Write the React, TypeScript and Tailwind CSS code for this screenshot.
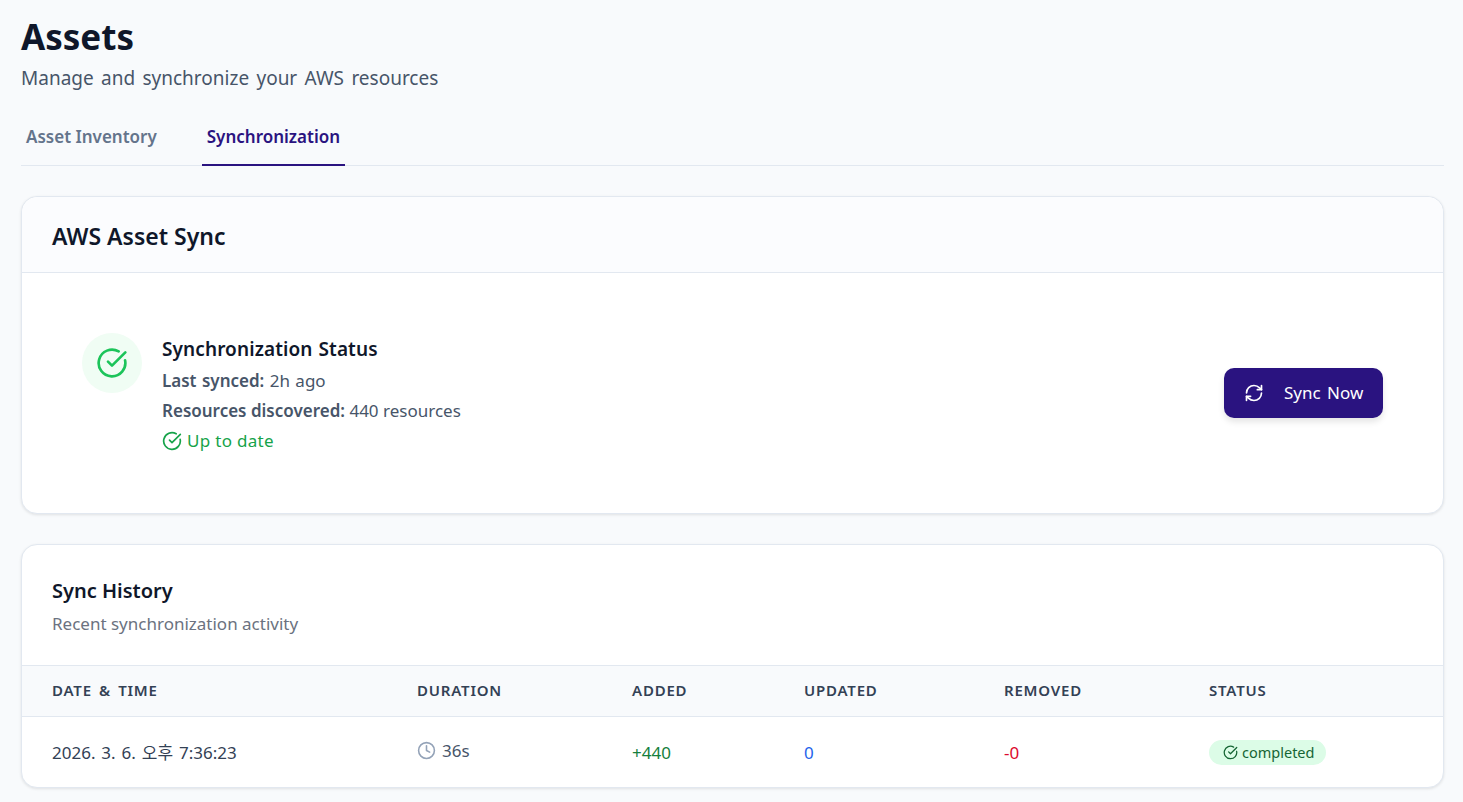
import React from 'react';
import { RefreshCw, CircleCheckBig, Clock } from 'lucide-react';

const font = "font-['Noto_Sans','Noto_Sans_CJK_KR',sans-serif]";

const HEADERS = ['DATE & TIME', 'DURATION', 'ADDED', 'UPDATED', 'REMOVED', 'STATUS'];

export default function App() {
  return (
    <div className={`${font} h-[802px] overflow-hidden bg-[#f8fafc] pl-[21px] pr-[19px] pt-[12px]`}>
      {/* Page heading */}
      <h1 className="text-[35px] leading-[50px] font-bold text-[#0f172a]">Assets</h1>
      <p className="mt-[3px] text-[19px] leading-[26px] [word-spacing:2.4px] text-[#475569]">Manage and synchronize your AWS resources</p>

      {/* Tabs */}
      <div className="mt-[18px] flex h-[57px] gap-[16px] border-b border-[#e2e8f0] text-[17px] font-semibold">
        <div className="flex h-[57px] items-center pl-[5px] pr-[4px] pb-[1px] text-[#64748b]">Asset Inventory</div>
        <div className="ml-[25px] flex h-[57px] items-center border-b-2 border-[#2a1380] px-[5px] text-[#2a1380]">Synchronization</div>
      </div>

      {/* Sync card */}
      <section className="mt-[30px] h-[318px] rounded-[16px] border border-[#e2e8f0] bg-white shadow-[0_1px_3px_rgba(0,0,0,0.1)]">
        <div className="flex h-[76px] items-center rounded-t-[16px] border-b border-[#e2e8f0] bg-[#fbfcfe] px-[30px] pt-[3px]">
          <h2 className="text-[23px] font-semibold text-[#0f172a]">AWS Asset Sync</h2>
        </div>
        <div className="flex items-center justify-between pl-[60px] pr-[60px] pt-[60px]">
          <div className="flex gap-[20px]">
            <div className="flex h-[60px] w-[60px] items-center justify-center rounded-full bg-[#f0fdf4]">
              <CircleCheckBig className="h-[32px] w-[32px] text-[#1cc45a]" />
            </div>
            <div className="-mb-[3px] pt-[1px]">
              <h3 className="mb-[2px] text-[19px] leading-[30px] font-semibold tracking-[0.1px] [word-spacing:1px] text-[#0f172a]">Synchronization Status</h3>
              <p className="text-[17px] leading-[30px] [word-spacing:1px] text-[#475569]"><strong className="font-semibold">Last synced:</strong> 2h ago</p>
              <p className="text-[17px] leading-[30px] text-[#475569]"><strong className="font-semibold">Resources discovered:</strong> 440 resources</p>
              <p className="flex items-center gap-[5px] text-[17px] leading-[30px] tracking-[0.3px] text-[#16a34a]"><CircleCheckBig className="h-[20px] w-[20px]" />Up to date</p>
            </div>
          </div>
          <button className="flex h-[50px] w-[159px] items-center gap-[20px] rounded-[10px] bg-[#2a1380] pl-[20px] text-[17px] font-normal [word-spacing:2px] text-white shadow-[0_4px_6px_rgba(0,0,0,0.1)]">
            <RefreshCw className="h-[20px] w-[20px]" />
            Sync Now
          </button>
        </div>
      </section>

      {/* Sync history */}
      <section className="mt-[30px] h-[244px] overflow-hidden rounded-[16px] border border-[#e2e8f0] bg-white shadow-[0_1px_3px_rgba(0,0,0,0.1)]">
        <div className="h-[120px] px-[30px] pt-[31px]">
          <h2 className="text-[20px] leading-[30px] font-semibold text-[#0f172a]">Sync History</h2>
          <p className="mt-[3px] text-[17px] leading-[30px] text-[#6b7280]">Recent synchronization activity</p>
        </div>
        <table className="w-full table-fixed border-collapse">
          <colgroup>
            <col className="w-[365px]" />
            <col className="w-[215px]" />
            <col className="w-[172px]" />
            <col className="w-[200px]" />
            <col className="w-[205px]" />
            <col />
          </colgroup>
          <thead>
            <tr className="h-[51px] border-y border-[#e2e8f0] bg-[#f8fafc]">
              {HEADERS.map((h) => (
                <th key={h} className="px-[30px] pb-[1px] text-left text-[15px] font-semibold tracking-[0.8px] [word-spacing:2.5px] text-[#334155]">{h}</th>
              ))}
            </tr>
          </thead>
          <tbody>
            <tr className="h-[71px] text-[17px]">
              <td className="px-[30px] [word-spacing:1.5px] text-[#334155]">2026. 3. 6. 오후 7:36:23</td>
              <td className="px-[30px] text-[#475569]">
                <span className="flex items-center gap-[6px] pb-[4px]"><Clock className="h-[19px] w-[19px] text-[#94a3b8]" />36s</span>
              </td>
              <td className="px-[30px] text-[#15803d]">+440</td>
              <td className="px-[30px] text-[#2563eb]">0</td>
              <td className="px-[30px] text-[#dc0a2d]">-0</td>
              <td className="px-[30px]">
                <span className="mt-[2px] inline-flex h-[25px] items-center gap-[4px] rounded-full bg-[#dcfce7] pl-[14px] pr-[12px] text-[14.5px] text-[#166534]">
                  <CircleCheckBig className="h-[15px] w-[15px]" />completed
                </span>
              </td>
            </tr>
          </tbody>
        </table>
      </section>
    </div>
  );
}
